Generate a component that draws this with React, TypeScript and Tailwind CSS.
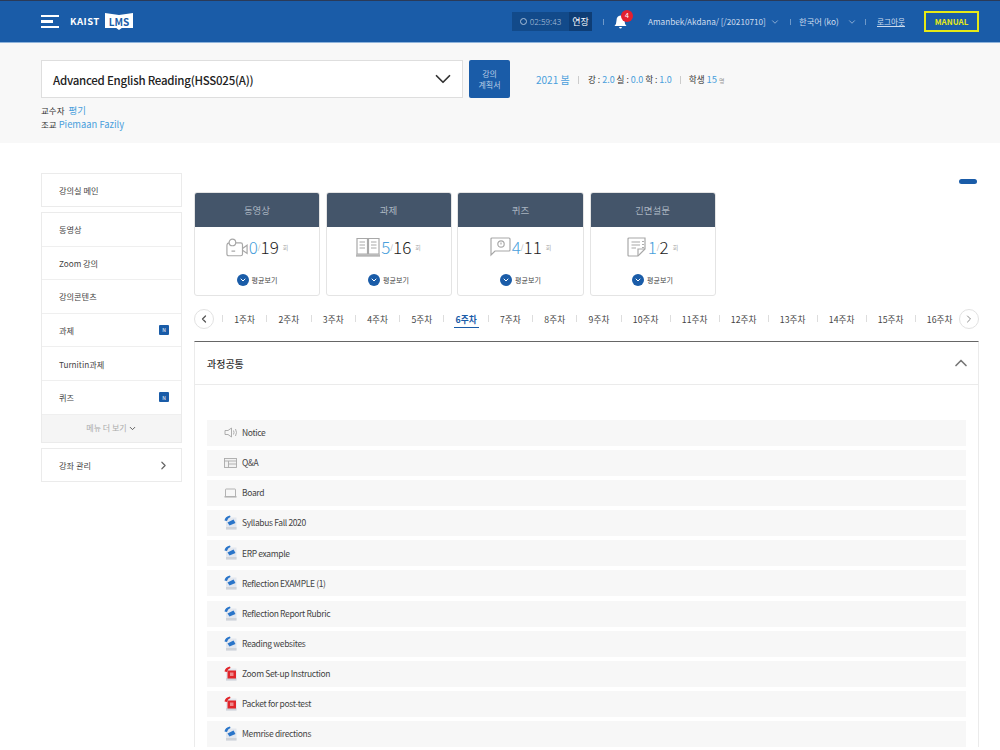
import React from "react";
import { ChevronDown, ChevronLeft, ChevronRight, ChevronUp } from "lucide-react";

const FONT = { fontFamily: '"Noto Sans CJK KR", "Noto Sans", sans-serif' };

const topMenu = ["동영상", "Zoom 강의", "강의콘텐츠", "과제", "Turnitin과제", "퀴즈"];
const weeks = Array.from({ length: 16 }, (_, i) => i + 1);

function VideoIcon() {
  return (
    <svg width="22" height="19" viewBox="0 0 24 20" fill="none" stroke="#a8a8a8" strokeWidth="1.3">
      <path d="M6 5 H16 Q18 5 18 7 V17 Q18 19 16 19 H3 Q1 19 1 17 V8 Q1 5 4 5" />
      <circle cx="7" cy="4.5" r="3.6" fill="#fff" />
      <path d="M18 11 L23 7.5 V16.5 L18 13" />
      <path d="M6 14 H10" />
    </svg>
  );
}

function BookIcon() {
  return (
    <svg width="24" height="20" viewBox="0 0 24 20" fill="none" stroke="#a8a8a8" strokeWidth="1.2">
      <path d="M1 1.5 H11.5 V17 H1 Z M12.5 1.5 H23 V17 H12.5 Z" />
      <path d="M3.5 5 H9 M3.5 8 H9 M3.5 11 H9 M15 5 H20.5 M15 8 H20.5 M15 11 H20.5" strokeWidth="1" />
      <path d="M0 18.5 H24" stroke="#b5b5b5" strokeWidth="2.4" />
    </svg>
  );
}

function QuizIcon() {
  return (
    <svg width="21" height="20" viewBox="0 0 21 20" fill="none" stroke="#a8a8a8" strokeWidth="1.2">
      <path d="M2 1 H19 Q20 1 20 2 V13 Q20 14 19 14 H5 L1 18 V2 Q1 1 2 1 Z" />
      <circle cx="11" cy="7" r="3.2" />
      <path d="M11 5.5 V7.5" />
    </svg>
  );
}

function NoteIcon() {
  return (
    <svg width="20" height="20" viewBox="0 0 20 20" fill="none" stroke="#a8a8a8" strokeWidth="1.2">
      <path d="M2 1 H18 V12 L11 19 H2 Q1 19 1 18 V2 Q1 1 2 1 Z" />
      <path d="M11 19 V12 H18" />
      <path d="M4.5 5 H13 M4.5 8 H13 M4.5 11 H9" />
      <path d="M16 4 V5 M16 7 V8 M16 10 V11" stroke="#777" />
    </svg>
  );
}

function SpeakerIcon() {
  return (
    <svg width="14" height="11" viewBox="0 0 14 11" fill="none" stroke="#a5a5a5" strokeWidth="0.9">
      <path d="M1 3.5 H4 L7.5 1 V10 L4 7.5 H1 Z" />
      <path d="M9.5 3.5 Q10.5 5.5 9.5 7.5 M11.5 2 Q13.5 5.5 11.5 9" />
    </svg>
  );
}

function TableIcon() {
  return (
    <svg width="13" height="10" viewBox="0 0 13 10" fill="none" stroke="#aaa" strokeWidth="0.9">
      <rect x="0.5" y="0.5" width="12" height="9" fill="#f2f2f2" />
      <path d="M0.5 3 H12.5 M4.5 3 V9.5 M4.5 6 H12.5" />
    </svg>
  );
}

function BoardIcon() {
  return (
    <svg width="13" height="10" viewBox="0 0 13 10" fill="none" stroke="#aaa" strokeWidth="0.9">
      <path d="M1.5 8 V1.5 Q1.5 1 2 1 H11 Q11.5 1 11.5 1.5 V8" />
      <path d="M0.5 8.8 H12.5" strokeWidth="1.4" />
    </svg>
  );
}

function FileIcon({ pdf }: { pdf?: boolean }) {
  const c = pdf ? "#e0262b" : "#2a75c9";
  return (
    <svg width="13" height="15" viewBox="0 0 13 15">
      <rect x="2" y="2.5" width="10.5" height="12" fill="#e3e7ee" />
      <rect x="2" y="12" width="10.5" height="2.5" fill="#cfd3d9" />
      <path d="M0.5 5.5 Q1 1.5 6 0.5 L6.5 2 Q3.5 3 3 6 Z" fill={c} />
      {pdf ? (
        <>
          <rect x="3.5" y="4.5" width="8.5" height="8" fill={c} />
          <rect x="6" y="6.5" width="3.5" height="3.5" fill="#f08a8c" />
        </>
      ) : (
        <path d="M3.5 7.5 L9.5 4.5 L11.5 8 L5.5 10.5 Z" fill={c} />
      )}
    </svg>
  );
}

const files = [
  { name: "Notice", icon: <SpeakerIcon /> },
  { name: "Q&A", icon: <TableIcon /> },
  { name: "Board", icon: <BoardIcon /> },
  { name: "Syllabus Fall 2020", icon: <FileIcon /> },
  { name: "ERP example", icon: <FileIcon /> },
  { name: "Reflection EXAMPLE (1)", icon: <FileIcon /> },
  { name: "Reflection Report Rubric", icon: <FileIcon /> },
  { name: "Reading websites", icon: <FileIcon /> },
  { name: "Zoom Set-up Instruction", icon: <FileIcon pdf /> },
  { name: "Packet for post-test", icon: <FileIcon pdf /> },
  { name: "Memrise directions", icon: <FileIcon /> },
];

const cards = [
  { title: "동영상", icon: <VideoIcon />, done: 0, total: 19, w: "w-[126px]" },
  { title: "과제", icon: <BookIcon />, done: 5, total: 16, w: "w-[126px]" },
  { title: "퀴즈", icon: <QuizIcon />, done: 4, total: 11, w: "w-[127px]" },
  { title: "긴면설문", icon: <NoteIcon />, done: 1, total: 2, w: "w-[126px]" },
];

function Header() {
  return (
    <header className="h-[43px] bg-[#1a5ca8] border-t border-t-[#2a3a58] border-b border-b-[#8fb4dc] flex items-center text-[#cfdcee] text-[9px] whitespace-nowrap">
      <div className="ml-[41px] flex flex-col gap-[3px] w-[18px]">
        <span className="h-[2.5px] w-[18px] bg-white" />
        <span className="h-[2.5px] w-[12px] bg-white" />
        <span className="h-[2.5px] w-[18px] bg-white" />
      </div>
      <span className="ml-[11px] w-[30px] text-[9.5px] font-bold tracking-[0.5px] text-white">KAIST</span>
      <span className="ml-[5px] h-[17px] w-[28px] bg-white text-[#1a5ca8] text-[10px] font-bold flex items-center justify-center [clip-path:polygon(0_0,50%_12%,100%_0,100%_88%,60%_88%,50%_100%,40%_88%,0_88%)]">LMS</span>
      <div className="ml-[379px] flex h-[19px] items-center bg-[#124a8a]">
        <span className="w-[57px] flex items-center justify-center gap-[3px] text-[8.5px] font-light text-[#a9bfd9]">
          <span className="w-[7px] h-[7px] rounded-full border border-[#a9bfd9]" />
          02:59:43
        </span>
        <span className="w-[23px] h-full bg-[#0e3d75] text-white flex items-center justify-center text-[9px]">연장</span>
      </div>
      <span className="ml-[11px] w-px h-[6px] bg-[#6f99c9]" />
      <div className="relative ml-[10px] w-[14px] h-[14px]">
        <svg width="13" height="14" viewBox="0 0 13 14" fill="#fff">
          <path d="M6.5 0.5 Q10.5 1 10.5 5.5 Q10.5 9 12.5 11 H0.5 Q2.5 9 2.5 5.5 Q2.5 1 6.5 0.5 Z M5 12 H8 Q7.5 13.5 6.5 13.5 Q5.5 13.5 5 12 Z" />
        </svg>
        <span className="absolute -top-[5px] left-[7px] w-[12px] h-[12px] rounded-full bg-[#e3202f] text-white text-[7px] flex items-center justify-center">4</span>
      </div>
      <span className="ml-[20px] w-[119px] text-[8.2px]">Amanbek/Akdana/ [/20210710]</span>
      <ChevronDown className="ml-[3px] w-[10px] h-[10px]" strokeWidth={1.5} />
      <span className="ml-[10px] w-px h-[6px] bg-[#6f99c9]" />
      <span className="ml-[8px] w-[40px] text-[8.3px]">한국어 (ko)</span>
      <ChevronDown className="ml-[8px] w-[10px] h-[10px]" strokeWidth={1.5} />
      <span className="ml-[8px] w-px h-[6px] bg-[#6f99c9]" />
      <span className="ml-[11px] w-[29px] underline text-[7.6px]">로그아웃</span>
      <span className="ml-[18px] w-[55px] h-[21px] border-2 border-[#e6e916] text-[#e6e916] text-[8px] font-bold flex items-center justify-center">MANUAL</span>
    </header>
  );
}

function CourseBar() {
  return (
    <section className="h-[100px] bg-[#f8f8f8] pl-[41px] pt-[17px]">
      <div className="flex items-center">
        <div className="w-[422px] h-[38px] bg-white border border-[#dedede] pl-[11px] pr-[6px] pt-[3px] flex items-center justify-between">
          <span className="text-[11.5px] tracking-[-0.25px] font-medium text-[#222]">Advanced English Reading(HSS025(A))</span>
          <ChevronDown className="w-[26px] h-[26px] text-[#333] -mt-[3px]" strokeWidth={1.6} />
        </div>
        <div className="ml-[6px] w-[41px] h-[38px] bg-[#1a5ca8] rounded-[2px] flex items-center justify-center text-center text-[8px] leading-[11px] text-[#b9cde6]">
          강의
          <br />
          계획서
        </div>
        <div className="ml-[26px] pt-[1px] flex items-center text-[8.6px] text-[#333] whitespace-nowrap">
          <span className="w-[33px] text-[#4a9fdc] text-[10px]">2021 봄</span>
          <span className="mx-[9px] w-px h-[8px] bg-[#ccc]" />
          <span>강 : <span className="text-[#4a9fdc] text-[9px]">2.0</span> 실 : <span className="text-[#4a9fdc] text-[9px]">0.0</span> 학 : <span className="text-[#4a9fdc] text-[9px]">1.0</span></span>
          <span className="mx-[8px] w-px h-[8px] bg-[#ccc]" />
          <span>학생 <span className="text-[#4a9fdc] text-[9.5px]">15</span> <span className="text-[6px] text-[#999]">명</span></span>
        </div>
      </div>
      <p className="mt-[5px] h-[14px] flex items-baseline gap-[4px] text-[8.5px] text-[#333]">
        교수자 <span className="text-[#4a9fdc] text-[9.5px]">평기</span>
      </p>
      <p className="h-[14px] flex items-baseline gap-[2px] text-[8.5px] text-[#333]">
        조교 <span className="text-[#4a9fdc] text-[9.4px]">Piemaan Fazily</span>
      </p>
    </section>
  );
}

function MenuRow({ label, badge }: { label: string; badge?: boolean }) {
  return (
    <div className="h-[33.6px] border-b border-[#efefef] pl-[17px] pr-[12px] flex items-center justify-between text-[8.2px] text-[#444]">
      {label}
      {badge && <span className="w-[10px] h-[10px] rounded-[1px] bg-[#1a5ca8] text-white text-[5px] flex items-center justify-center">N</span>}
    </div>
  );
}

function Sidebar() {
  return (
    <aside className="w-[141px] shrink-0 flex flex-col gap-[5px] text-[#444]">
      <div className="h-[34px] border border-[#ebebeb] pl-[17px] flex items-center text-[8.2px]">강의실 메인</div>
      <div className="border border-[#ebebeb]">
        {topMenu.map((m) => (
          <MenuRow key={m} label={m} badge={m === "과제" || m === "퀴즈"} />
        ))}
        <div className="h-[27.5px] bg-[#f5f5f5] flex items-center justify-center gap-[1px] text-[8px] text-[#aaa]">
          메뉴 더 보기
          <ChevronDown className="w-[9px] h-[9px] text-[#555]" strokeWidth={2.5} />
        </div>
      </div>
      <div className="h-[34px] border border-[#ebebeb] pl-[17px] pr-[11px] flex items-center justify-between text-[8.2px]">
        강좌 관리
        <ChevronRight className="w-[13px] h-[13px] text-[#666]" strokeWidth={2.2} />
      </div>
    </aside>
  );
}

function StatCards() {
  return (
    <div className="flex gap-[5.5px]">
      {cards.map((c) => (
        <div key={c.title} className={`${c.w} h-[104px] rounded-[3px] border border-[#e4e4e4] overflow-hidden`}>
          <div className="h-[34px] bg-[#44556a] flex items-center justify-center text-[9.5px] text-[#a9b4c0]">{c.title}</div>
          <div className="h-[40px] flex items-center justify-center">
            {c.icon}
            <span className="ml-[1px] text-[#4a9fdc] text-[17px] font-light">{c.done}</span>
            <span className="text-[#aaa] text-[7px]">/</span>
            <span className="text-[#222] text-[17px] font-light">{c.total}</span>
            <span className="ml-[4px] text-[6px] text-[#aaa]">회</span>
          </div>
          <div className="mt-[7px] flex items-center justify-center gap-[3px] text-[7px] text-[#444]">
            <span className="w-[12px] h-[12px] rounded-full bg-[#1a5ca8] flex items-center justify-center">
              <ChevronDown className="w-[8px] h-[8px] text-white" strokeWidth={3} />
            </span>
            평균보기
          </div>
        </div>
      ))}
    </div>
  );
}

function WeekNav() {
  return (
    <div className="mt-[13px] h-[20px] flex items-center">
      <span className="w-[20px] h-[20px] shrink-0 rounded-full border border-[#e2e2e2] flex items-center justify-center">
        <ChevronLeft className="w-[12px] h-[12px] text-[#555]" strokeWidth={2.5} />
      </span>
      <div className="ml-[8px] w-[729px] shrink-0 flex items-center">
        {weeks.map((w) => (
          <React.Fragment key={w}>
            <span className="w-px h-[7px] shrink-0 bg-[#ddd]" />
            <span
              className={
                (w < 10 ? "w-[43.3px] shrink-0 pt-[2px] " : "w-[48px] shrink-0 pt-[2px] ") +
                (w === 6 ? "text-center text-[8.7px] font-bold text-[#1a5ca8]" : "text-center text-[8.7px] text-[#444]")
              }
            >
              <span className={w === 6 ? "border-b border-[#1a5ca8] px-[2px] pb-[1px]" : ""}>{w}주차</span>
            </span>
          </React.Fragment>
        ))}
      </div>
      <span className="ml-[8px] w-[20px] h-[20px] shrink-0 rounded-full border border-[#e2e2e2] flex items-center justify-center">
        <ChevronRight className="w-[12px] h-[12px] text-[#888]" strokeWidth={2} />
      </span>
    </div>
  );
}

function CommonSection() {
  return (
    <section className="mt-[12px] border-t border-t-[#666] border-x border-x-[#ebebeb]">
      <div className="h-[43px] border-b border-[#ebebeb] pl-[12px] pr-[7px] flex items-center justify-between">
        <span className="text-[10px] font-medium text-[#333]">과정공통</span>
        <ChevronUp className="w-[20px] h-[20px] text-[#777]" strokeWidth={2} />
      </div>
      <div className="mt-[35px] px-[12px] flex flex-col gap-[4.1px]">
        {files.map((f) => (
          <div key={f.name} className="h-[26px] shrink-0 pb-[1px] bg-[#f7f7f7] flex items-center text-[8.5px] tracking-[-0.35px] text-[#444]">
            <span className="ml-[17px] w-[18px] flex justify-start">{f.icon}</span>
            {f.name}
          </div>
        ))}
      </div>
    </section>
  );
}

export default function App() {
  return (
    <div className="w-[1000px] h-[750px] overflow-hidden bg-white" style={FONT}>
      <Header />
      <CourseBar />
      <main className="flex pl-[41px] pt-[30px]">
        <Sidebar />
        <div className="ml-[12px] w-[785px] relative pt-[19px]">
          <span className="absolute right-[2px] top-[6px] w-[18px] h-[5px] rounded-full bg-[#1a5ca8]" />
          <StatCards />
          <WeekNav />
          <CommonSection />
        </div>
      </main>
    </div>
  );
}
